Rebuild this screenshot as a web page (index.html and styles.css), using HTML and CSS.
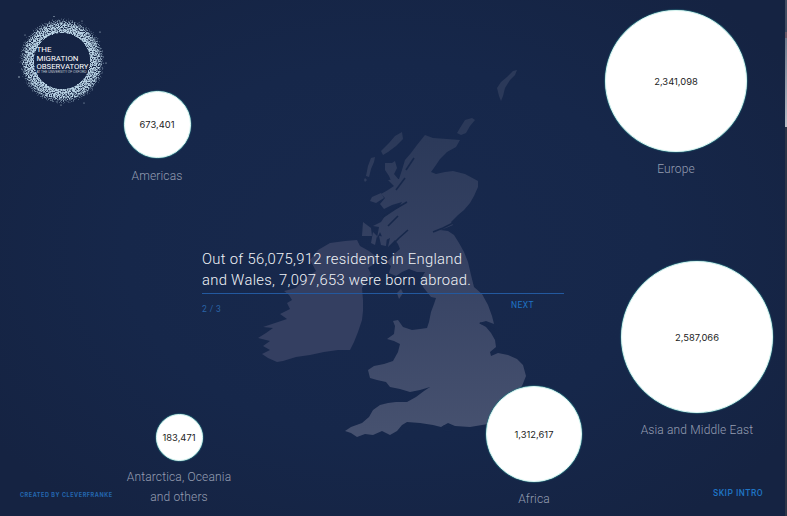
FILE: index.html
```html
<!DOCTYPE html>
<html lang="en">
<head>
    <meta charset="UTF-8">
    <title>The Migration Observatory</title>
    <link rel="stylesheet" href="styles.css">
</head>
<body>
    <div class="stage">
        <svg class="map" viewBox="0 0 787 516" aria-hidden="true">
            <defs>
                <linearGradient id="landFill" gradientUnits="userSpaceOnUse" x1="0" y1="130" x2="0" y2="430">
                    <stop offset="0" stop-color="#2b3959"/>
                    <stop offset="0.45" stop-color="#364263"/>
                    <stop offset="1" stop-color="#46516f"/>
                </linearGradient>
            </defs>
            <g fill="url(#landFill)">
                <!-- great britain -->
                <path d="M425 135 L433 138 L447 139 L460 140 L456 147 L447 152 L440 159 L436 165 L431 172 L436 174 L445 172 L453 171 L465 174 L478 181 L478 187 L474 196 L470 203 L464 210 L458 215 L451 222 L453 225 L446 228 L440 230 L448 231 L454 235 L459 243 L464 252 L468 262 L471 275 L474 287 L482 294 L488 305 L492 316 L494 324 L486 321 L479 323 L486 327 L491 333 L495 340 L496 347 L490 352 L491 356 L498 353 L508 355 L517 359 L523 365 L526 376 L522 386 L514 394 L505 400 L497 408 L492 418 L488 424 L470 427 L455 426 L448 423 L441 427 L433 425 L420 423 L407 422 L402 425 L397 431 L390 435 L382 431 L373 435 L365 434 L357 437 L351 433 L345 431 L351 427 L362 423 L369 417 L373 410 L380 405 L388 403 L396 402 L407 402 L416 397 L424 391 L430 387 L420 390 L410 392 L400 389 L390 387 L386 382 L377 380 L370 378 L368 370 L374 366 L384 364 L393 361 L398 352 L400 344 L394 341 L387 339 L394 334 L395 326 L393 321 L398 320 L403 327 L412 330 L420 329 L427 328 L429 322 L431 312 L434 304 L436 298 L431 297 L427 292 L423 287 L421 279 L425 272 L417 272 L409 269 L402 272 L396 276 L389 273 L391 266 L387 262 L393 255 L400 249 L398 244 L395 240 L388 247 L390 238 L384 241 L380 232 L377 238 L379 227 L373 226 L381 222 L385 216 L390 212 L399 207 L402 202 L392 205 L384 209 L380 204 L385 198 L381 194 L388 190 L394 186 L388 180 L399 179 L402 170 L405 160 L411 153 L417 145 Z"/>
                <!-- skye, mull and small isles -->
                <path d="M385 163 L392 163 L395 161 L397 168 L394 174 L399 180 L392 183 L389 176 L385 170 Z"/>
                <path d="M372 197 L381 193 L384 198 L376 203 L370 201 Z"/>
                <path d="M379 236 L387 237 L386 246 L381 245 Z"/>
                <path d="M373 232 L377 236 L375 245 L371 243 Z"/>
                <path d="M363 222 L371 228 L372 236 L362 236 Z"/>
                <!-- outer hebrides -->
                <path d="M402 132 L403 139 L396 146 L388 152 L383 155 L381 151 L389 143 L395 136 Z"/>
                <path d="M375 157 L374 162 L371 169 L369 177 L366 176 L368 166 L371 158 Z"/>
                <path d="M365 178 L367 180 L365 182 L364 180 Z"/>
                <!-- orkney -->
                <path d="M460 128 L465 120 L472 118 L475 120 L470 126 L466 133 L461 135 L457 133 Z"/>
                <!-- shetland -->
                <path d="M507 77 L513 71 L517 70 L515 75 L510 80 L505 88 L503 96 L501 101 L499 96 L497 88 L501 82 Z"/>
                <!-- isle of man -->
                <path d="M397 293 L401 289 L403 293 L399 299 Z"/>
            </g>
            <!-- ireland -->
            <path class="ireland" d="M330 243 L345 241 L357 240 L360 246 L369 251 L377 257 L374 264 L368 268 L371 274 L366 281 L362 288 L363 300 L363 311 L362 320 L358 332 L354 342 L350 350 L338 350 L324 352 L310 355 L296 357 L283 361 L277 362 L268 358 L262 354 L270 350 L263 346 L270 341 L258 338 L266 333 L273 328 L263 327 L278 322 L287 319 L280 314 L290 309 L287 303 L292 300 L289 295 L284 291 L296 288 L304 279 L316 271 L310 260 L318 250 Z"/>
            <!-- sea lochs and estuaries -->
            <g class="inlets">
                <path d="M407 202 L395 209 L383 217"/>
                <path d="M408 230 L399 238 L390 247"/>
                <path d="M398 216 L388 226"/>
                <path d="M405 178 L396 190"/>
                <path d="M453 223 L443 228 L433 232"/>
                <path d="M480 323 L489 326 L495 330"/>
                <path d="M414 158 L406 170"/>
                <ellipse cx="448" cy="428" rx="5" ry="2.5"/>
            </g>
        </svg>

        <svg class="logo" viewBox="0 0 92 92" role="img" aria-label="The Migration Observatory">
            <defs>
                <radialGradient id="ringFade">
                    <stop offset="0.59" stop-color="#fff" stop-opacity="0"/>
                    <stop offset="0.62" stop-color="#fff" stop-opacity="1"/>
                    <stop offset="0.8" stop-color="#fff" stop-opacity="0.85"/>
                    <stop offset="1" stop-color="#fff" stop-opacity="0.15"/>
                </radialGradient>
                <filter id="speckle" x="0" y="0" width="100%" height="100%" color-interpolation-filters="sRGB">
                    <feTurbulence type="fractalNoise" baseFrequency="0.8" numOctaves="2" seed="7" result="noise"/>
                    <feColorMatrix in="noise" type="matrix" values="0 0 0 0 0.72  0 0 0 0 0.82  0 0 0 0 0.89  1.6 0 0 0 -0.1" result="tint"/>
                    <feComposite in="tint" in2="SourceGraphic" operator="in" result="mix"/>
                    <feComponentTransfer in="mix">
                        <feFuncA type="linear" slope="2.6" intercept="-0.9"/>
                    </feComponentTransfer>
                </filter>
            </defs>
            <circle cx="46" cy="46" r="46" fill="url(#ringFade)" filter="url(#speckle)"/>
            <g class="logo-dust">
                <circle cx="38" cy="1.5" r="0.6"/><circle cx="84" cy="17" r="0.6"/><circle cx="3" cy="62" r="0.7"/>
                <circle cx="45" cy="90" r="0.6"/><circle cx="68" cy="88" r="0.5"/><circle cx="90" cy="48" r="0.6"/>
                <circle cx="9" cy="20" r="0.5"/><circle cx="66" cy="6" r="0.5"/>
            </g>
            <text class="logo-text" x="20.5" y="37">THE</text>
            <text class="logo-text" x="20.5" y="45.5" textLength="42" lengthAdjust="spacingAndGlyphs">MIGRATION</text>
            <text class="logo-text" x="20.5" y="53.5" textLength="52" lengthAdjust="spacingAndGlyphs">OBSERVATORY</text>
            <text class="logo-small" x="20.5" y="58" textLength="50" lengthAdjust="spacingAndGlyphs">AT THE UNIVERSITY OF OXFORD</text>
        </svg>

        <div class="region region-americas">
            <div class="bubble"><span>673,401</span></div>
            <p class="region-name">Americas</p>
        </div>
        <div class="region region-europe">
            <div class="bubble"><span>2,341,098</span></div>
            <p class="region-name">Europe</p>
        </div>
        <div class="region region-asia">
            <div class="bubble"><span>2,587,066</span></div>
            <p class="region-name">Asia and Middle East</p>
        </div>
        <div class="region region-africa">
            <div class="bubble"><span>1,312,617</span></div>
            <p class="region-name">Africa</p>
        </div>
        <div class="region region-oceania">
            <div class="bubble"><span>183,471</span></div>
            <p class="region-name">Antarctica, Oceania<br>and others</p>
        </div>

        <div class="intro">
            <p class="intro-text">Out of 56,075,912 residents in England<br>and Wales, 7,097,653 were born abroad.</p>
            <div class="intro-nav">
                <span class="step">2 / 3</span>
                <a class="next" href="#">NEXT</a>
            </div>
        </div>

        <a class="credit" href="#">CREATED BY CLEVERFRANKE</a>
        <a class="skip" href="#">SKIP INTRO</a>
        <div class="edge"></div>
    </div>
</body>
</html>
```

FILE: styles.css
```css
* {
    box-sizing: border-box;
}
html, body {
    margin: 0;
    height: 100%;
    overflow: hidden;
}
body {
    background: #15233f;
    font-family: "Roboto", "Liberation Sans", sans-serif;
}
.stage {
    position: relative;
    width: 787px;
    height: 516px;
    overflow: hidden;
    background: radial-gradient(ellipse 480px 340px at 390px 250px, #18294d 0%, #16274a 55%, #152342 100%);
}
.map {
    position: absolute;
    top: 0;
    left: 0;
    width: 787px;
    height: 516px;
    filter: blur(0.4px);
}
.ireland {
    fill: #343f61;
}
.inlets {
    fill: none;
    stroke: #17284b;
    stroke-width: 1.6;
}
.logo {
    position: absolute;
    top: 15px;
    left: 15.5px;
    width: 92px;
    height: 92px;
}
.logo-dust {
    fill: #c3d6e4;
}
.logo-text {
    fill: #fff;
    font-size: 8px;
}
.logo-small {
    fill: #c9d1dc;
    font-family: "Liberation Sans", sans-serif;
    font-size: 3px;
}

/* bubbles */
.region {
    position: absolute;
    display: flex;
    flex-direction: column;
    align-items: center;
}
.bubble {
    display: flex;
    justify-content: center;
    align-items: center;
    border-radius: 50%;
    background: #fff;
    border: 1.5px solid #d8f6f2;
    box-shadow: 0 0 1px 0.5px #2a7480;
    color: #222;
    font-family: "Inter", "Liberation Sans", sans-serif;
    font-size: 9.4px;
}
.region-name {
    margin: 7px 0 0;
    color: #959eb2;
    font-size: 12px;
    font-weight: 300;
    line-height: 20px;
    letter-spacing: 0.15px;
    text-align: center;
    white-space: nowrap;
}
.region-americas {
    left: 97px;
    top: 91px;
    width: 120px;
}
.region-americas .region-name {
    margin-top: 8px;
}
.region-americas .bubble {
    width: 67px;
    height: 67px;
}
.region-europe {
    left: 576px;
    top: 10px;
    width: 200px;
}
.region-europe .bubble {
    width: 142px;
    height: 142px;
}
.region-asia {
    left: 597px;
    top: 261px;
    width: 200px;
}
.region-asia .bubble {
    width: 152px;
    height: 152px;
}
.region-africa {
    left: 474px;
    top: 386px;
    width: 120px;
}
.region-africa .bubble {
    width: 96px;
    height: 96px;
}
.region-oceania {
    left: 109px;
    top: 414px;
    width: 140px;
}
.region-oceania .bubble {
    width: 47px;
    height: 47px;
}
.region-oceania .region-name {
    margin-top: 6px;
}

/* intro copy */
.intro {
    position: absolute;
    left: 202px;
    top: 249px;
    width: 362px;
}
.intro-text {
    margin: 0;
    padding-bottom: 2px;
    border-bottom: 1px solid #23599f;
    color: #f0f3f7;
    font-size: 14.8px;
    font-weight: 300;
    line-height: 21px;
    letter-spacing: 0.3px;
}
.intro-nav {
    display: flex;
    justify-content: space-between;
    padding: 6px 30px 0 0;
    font-size: 8.5px;
    letter-spacing: 0.4px;
}
.step {
    margin-top: 4px;
    color: #2a64a8;
}
.next {
    color: #1f74c4;
    text-decoration: none;
}
.credit {
    position: absolute;
    left: 20px;
    top: 492px;
    color: #2467b0;
    font-family: "Inter", "Liberation Sans", sans-serif;
    font-size: 5.5px;
    font-weight: 700;
    letter-spacing: 0.55px;
    text-decoration: none;
}
.skip {
    position: absolute;
    left: 713px;
    top: 488px;
    color: #1f74c4;
    font-size: 8.5px;
    font-weight: 500;
    letter-spacing: 0.5px;
    text-decoration: none;
}
.edge {
    position: absolute;
    top: 0;
    right: 0;
    width: 2px;
    height: 516px;
    background: linear-gradient(#444e63 0 32px, #6b5a68 32px 38px, #6f7a8c 38px, #b9bdc6 127px, #2d3548 127px);
}
```
